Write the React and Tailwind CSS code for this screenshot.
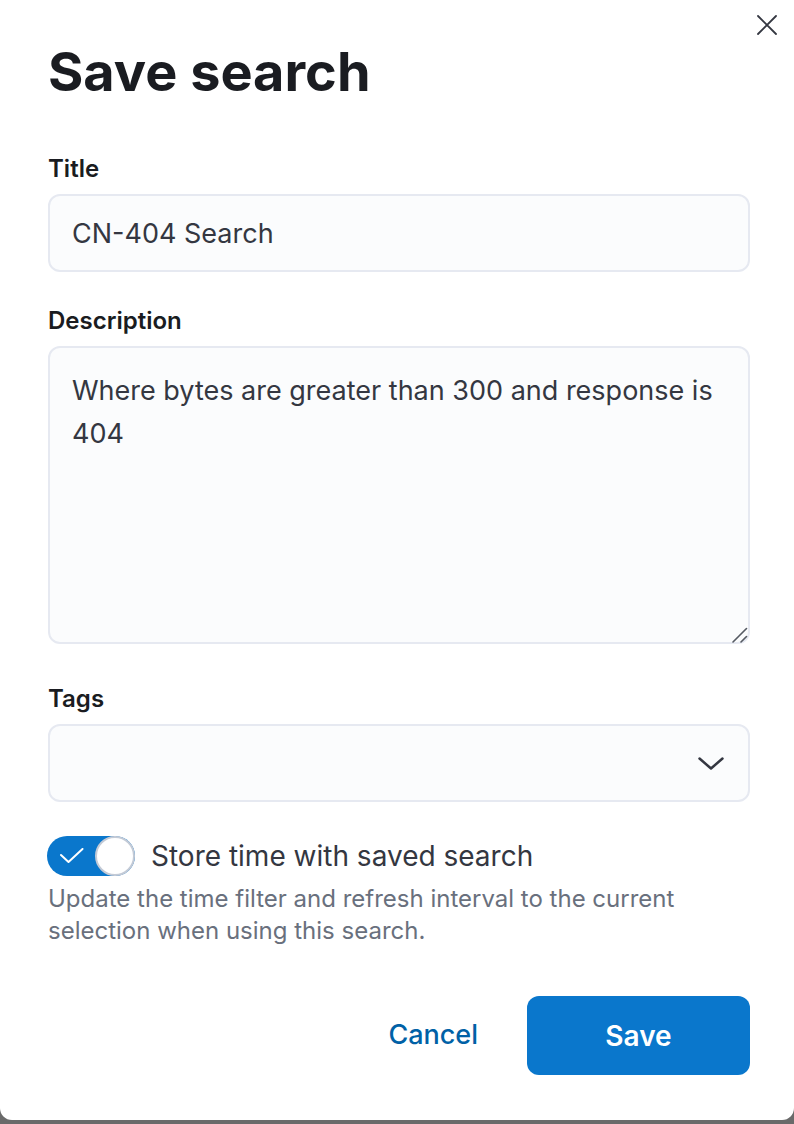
import React from "react";

export default function App() {
  return (
    <div className="h-[1124px] w-[794px] overflow-hidden bg-[#6a6a6a] [font-family:Inter,'Noto_Sans',sans-serif]">
      <div className="relative h-[1120px] w-full rounded-b-[12px] bg-white pl-[48px] pr-[44px]">
        <button
          aria-label="Close"
          className="absolute right-[17px] top-[15px] flex h-[20px] w-[20px] items-center justify-center"
        >
          <svg width="20" height="20" viewBox="0 0 20 20" fill="none">
            <path d="M1 1 L19 19 M19 1 L1 19" stroke="#343741" strokeWidth="1.8" strokeLinecap="round" />
          </svg>
        </button>

        <h1 className="pt-[39px] text-[54px] font-bold leading-[66px] text-[#1a1c21]">Save search</h1>

        <label className="mt-[48px] block text-[24px] font-semibold leading-[32px] text-[#1a1c21]">Title</label>
        <input
          readOnly
          defaultValue="CN-404 Search"
          className="mt-[9px] block h-[78px] w-full rounded-[12px] border-2 border-[#e6e9f1] bg-[#fbfcfd] px-[22px] text-[27px] text-[#343741] outline-none"
        />

        <label className="mt-[33px] block text-[24px] font-semibold leading-[32px] text-[#1a1c21]">Description</label>
        <div className="relative mt-[9px]">
          <textarea
            readOnly
            defaultValue="Where bytes are greater than 300 and response is 404"
            className="block h-[298px] w-full resize-none rounded-[12px] border-2 border-[#e6e9f1] bg-[#fbfcfd] px-[22px] pt-[21px] text-[27px] leading-[43px] text-[#343741] outline-none"
          />
          <svg width="16" height="16" viewBox="0 0 16 16" fill="none" className="pointer-events-none absolute bottom-[1px] right-[2px]">
            <path d="M1 15 L14.5 1.5 M9 15 L14.5 9.5" stroke="#555a63" strokeWidth="1.6" strokeLinecap="round" />
          </svg>
        </div>

        <label className="mt-[39px] block text-[24px] font-semibold leading-[32px] text-[#1a1c21]">Tags</label>
        <div className="mt-[9px] flex h-[78px] w-full items-center justify-end rounded-[12px] border-2 border-[#e6e9f1] bg-[#fbfcfd] pr-[24px]">
          <svg width="26" height="13" viewBox="0 0 26 13" fill="none">
            <path d="M1.5 1.5 L13 11.5 L24.5 1.5" stroke="#343741" strokeWidth="2.5" strokeLinecap="round" strokeLinejoin="round" />
          </svg>
        </div>

        <div className="mt-[34px] flex items-center gap-[16px]">
          <div className="-ml-px flex h-[40px] w-[88px] items-center justify-between rounded-full bg-[#0a77cc]">
            <svg width="24" height="16" viewBox="0 0 24 16" fill="none" className="ml-[13px]">
              <path d="M1 7 L8.5 14 L22.5 1" stroke="white" strokeWidth="2" strokeLinecap="round" strokeLinejoin="round" />
            </svg>
            <div className="h-[40px] w-[40px] rounded-full border-2 border-[#c3cad6] bg-white" />
          </div>
          <span className="text-[28px] leading-[40px] text-[#343741]">Store time with saved search</span>
        </div>
        <p className="mt-[7px] text-[24px] leading-[32px] text-[#69707d]">
          Update the time filter and refresh interval to the current selection when using this search.
        </p>

        <div className="mt-[49px] flex items-center justify-end gap-[25px]">
          <button className="h-[79px] px-[24px] text-[27px] font-medium text-[#0061a6]">Cancel</button>
          <button className="h-[79px] w-[223px] rounded-[12px] bg-[#0a77cc] text-[28px] font-semibold text-white">Save</button>
        </div>
      </div>
    </div>
  );
}
